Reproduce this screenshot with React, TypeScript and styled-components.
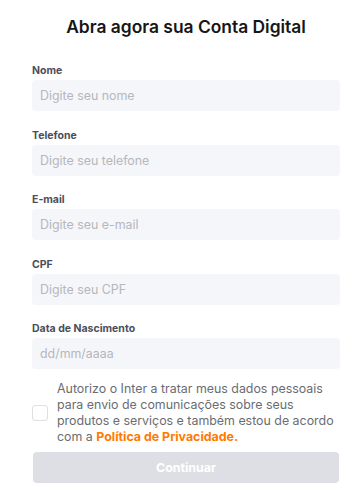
import styled, { createGlobalStyle } from "styled-components";

const GlobalStyle = createGlobalStyle`
  body {
    margin: 0;
    background: #fff;
    font-family: Inter, "Noto Sans", sans-serif;
  }
`;

const Page = styled.div`
  width: 308px;
  margin-left: 32px;
  padding-top: 16px;
  display: flex;
  flex-direction: column;
`;

const Title = styled.h1`
  margin: 0 0 27px;
  font-size: 17.4px;
  font-weight: 600;
  line-height: 22px;
  color: #161616;
  text-align: center;
`;

const Form = styled.form`
  display: flex;
  flex-direction: column;
`;

const Fields = styled.div`
  display: flex;
  flex-direction: column;
  gap: 18.5px;
`;

const Field = styled.label`
  display: flex;
  flex-direction: column;
  gap: 3px;
`;

const Label = styled.span`
  font-size: 10.5px;
  font-weight: 700;
  line-height: 12px;
  color: #4b4e5c;
`;

const Input = styled.input`
  height: 31px;
  box-sizing: border-box;
  border: none;
  border-radius: 4px;
  background: #f5f6fa;
  padding: 0 8px;
  font-family: inherit;
  font-size: 12.4px;
  color: #161616;
  outline: none;

  &::placeholder {
    color: #b6b7bb;
  }
`;

const Consent = styled.div`
  display: flex;
  align-items: center;
  gap: 9px;
  margin-top: 12px;
`;

const Box = styled.span`
  flex: none;
  width: 16px;
  height: 16px;
  box-sizing: border-box;
  border: 1.5px solid #dedfe4;
  border-radius: 3px;
`;

const ConsentText = styled.p`
  margin: 0;
  font-size: 12.4px;
  line-height: 16px;
  color: #6a6c72;

  a {
    color: #ff7a00;
    font-weight: 700;
    text-decoration: none;
  }
`;

const Button = styled.button`
  height: 31px;
  margin: 7px 1px 0;
  border: none;
  border-radius: 4px;
  background: #dedfe4;
  color: #fff;
  font-family: inherit;
  font-size: 12.4px;
  font-weight: 700;
`;

const fields = [
  { label: "Nome", placeholder: "Digite seu nome" },
  { label: "Telefone", placeholder: "Digite seu telefone" },
  { label: "E-mail", placeholder: "Digite seu e-mail" },
  { label: "CPF", placeholder: "Digite seu CPF" },
  { label: "Data de Nascimento", placeholder: "dd/mm/aaaa" },
];

export default function App() {
  return (
    <>
      <GlobalStyle />
      <Page>
        <Title>Abra agora sua Conta Digital</Title>
        <Form>
          <Fields>
            {fields.map((f) => (
              <Field key={f.label}>
                <Label>{f.label}</Label>
                <Input placeholder={f.placeholder} />
              </Field>
            ))}
          </Fields>
          <Consent>
            <Box />
            <ConsentText>
              Autorizo o Inter a tratar meus dados pessoais para envio de
              comunicações sobre seus produtos e serviços e também estou de
              acordo com a <a href="#">Política de Privacidade.</a>
            </ConsentText>
          </Consent>
          <Button type="button" disabled>
            Continuar
          </Button>
        </Form>
      </Page>
    </>
  );
}
